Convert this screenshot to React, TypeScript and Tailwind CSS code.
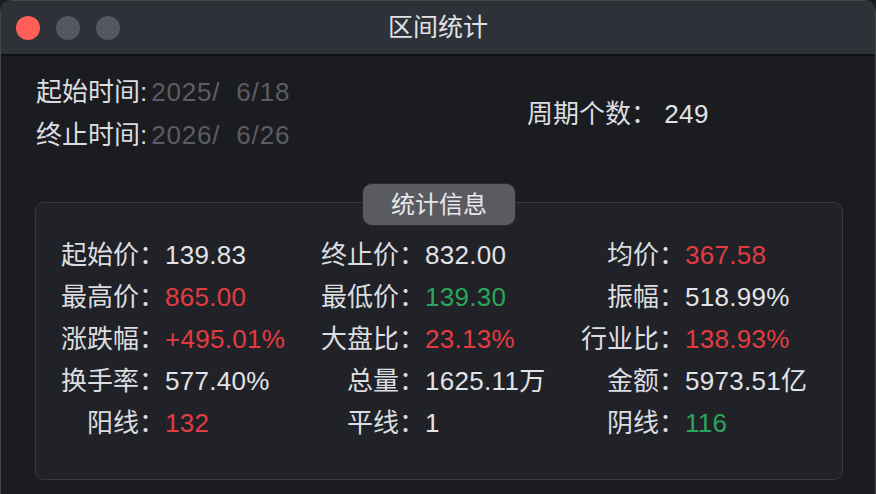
import React from "react";

const RED = "text-[#e23c41]";
const GREEN = "text-[#2aa65c]";
const WHITE = "text-[#e2e3e6]";

type Cell = { label: string; value: string; color: string };

const rows: Cell[][] = [
  [
    { label: "起始价：", value: "139.83", color: WHITE },
    { label: "终止价：", value: "832.00", color: WHITE },
    { label: "均价：", value: "367.58", color: RED },
  ],
  [
    { label: "最高价：", value: "865.00", color: RED },
    { label: "最低价：", value: "139.30", color: GREEN },
    { label: "振幅：", value: "518.99%", color: WHITE },
  ],
  [
    { label: "涨跌幅：", value: "+495.01%", color: RED },
    { label: "大盘比：", value: "23.13%", color: RED },
    { label: "行业比：", value: "138.93%", color: RED },
  ],
  [
    { label: "换手率：", value: "577.40%", color: WHITE },
    { label: "总量：", value: "1625.11万", color: WHITE },
    { label: "金额：", value: "5973.51亿", color: WHITE },
  ],
  [
    { label: "阳线：", value: "132", color: RED },
    { label: "平线：", value: "1", color: WHITE },
    { label: "阴线：", value: "116", color: GREEN },
  ],
];

const App = () => {
  return (
    <div
      className="h-[494px] w-[876px] overflow-hidden bg-[#1b1c20]"
      style={{ fontFamily: '"Liberation Sans", "Noto Sans CJK SC", sans-serif' }}
    >
      <div className="h-[520px] rounded-t-[12px] border border-[#45474c] bg-[#1b1c20] overflow-hidden">
        {/* title bar */}
        <div className="relative flex h-[55px] items-center border-b-2 border-[#0f1012] bg-[#2e3138] px-[15px]">
          <div className="flex gap-[16px]">
            <span className="h-[24px] w-[24px] rounded-full bg-[#fe5f57]" />
            <span className="h-[24px] w-[24px] rounded-full bg-[#55585e]" />
            <span className="h-[24px] w-[24px] rounded-full bg-[#55585e]" />
          </div>
          <div className="absolute inset-x-0 top-0 flex h-[54px] items-center justify-center text-[25px] text-[#e0e1e4]">
            区间统计
          </div>
        </div>

        {/* time range */}
        <div className="flex items-center pl-[35px] pt-[15px] text-[26px]">
          <div className="w-[491px]">
            <div className="flex h-[43px] items-center">
              <span className="text-[#dcdde0]">起始时间:</span>
              <span className="ml-[4px] whitespace-pre tracking-[0.8px] text-[#5c5d62]">2025/  6/18</span>
            </div>
            <div className="flex h-[43px] items-center">
              <span className="text-[#dcdde0]">终止时间:</span>
              <span className="ml-[4px] whitespace-pre tracking-[0.8px] text-[#5c5d62]">2026/  6/26</span>
            </div>
          </div>
          <div className="whitespace-pre text-[#dcdde0]">
            周期个数： <span className="tracking-[0.4px] text-[#e2e3e6]">249</span>
          </div>
        </div>

        {/* stats panel */}
        <div className="relative ml-[34px] mt-[45px] h-[278px] w-[808px] rounded-[9px] border border-[#38393e] bg-[#202227] pl-[24px] pt-[31px]">
          <div className="absolute -top-[20px] left-1/2 flex h-[43px] w-[154px] -translate-x-1/2 items-center justify-center rounded-[10px] border border-[#2a2b2f] bg-[#5a5b60] text-[24px] text-[#e8e8ea]">
            统计信息
          </div>
          {rows.map((row, i) => (
            <div key={i} className="flex h-[42px] items-center text-[26px]">
              {row.map((c) => (
                <div key={c.label} className="flex w-[260px] items-center">
                  <span className="w-[105px] text-right text-[#dcdde0]">{c.label}</span>
                  <span className={`${c.color} tracking-[0.3px]`}>{c.value}</span>
                </div>
              ))}
            </div>
          ))}
        </div>
      </div>
    </div>
  );
};

export default App;
